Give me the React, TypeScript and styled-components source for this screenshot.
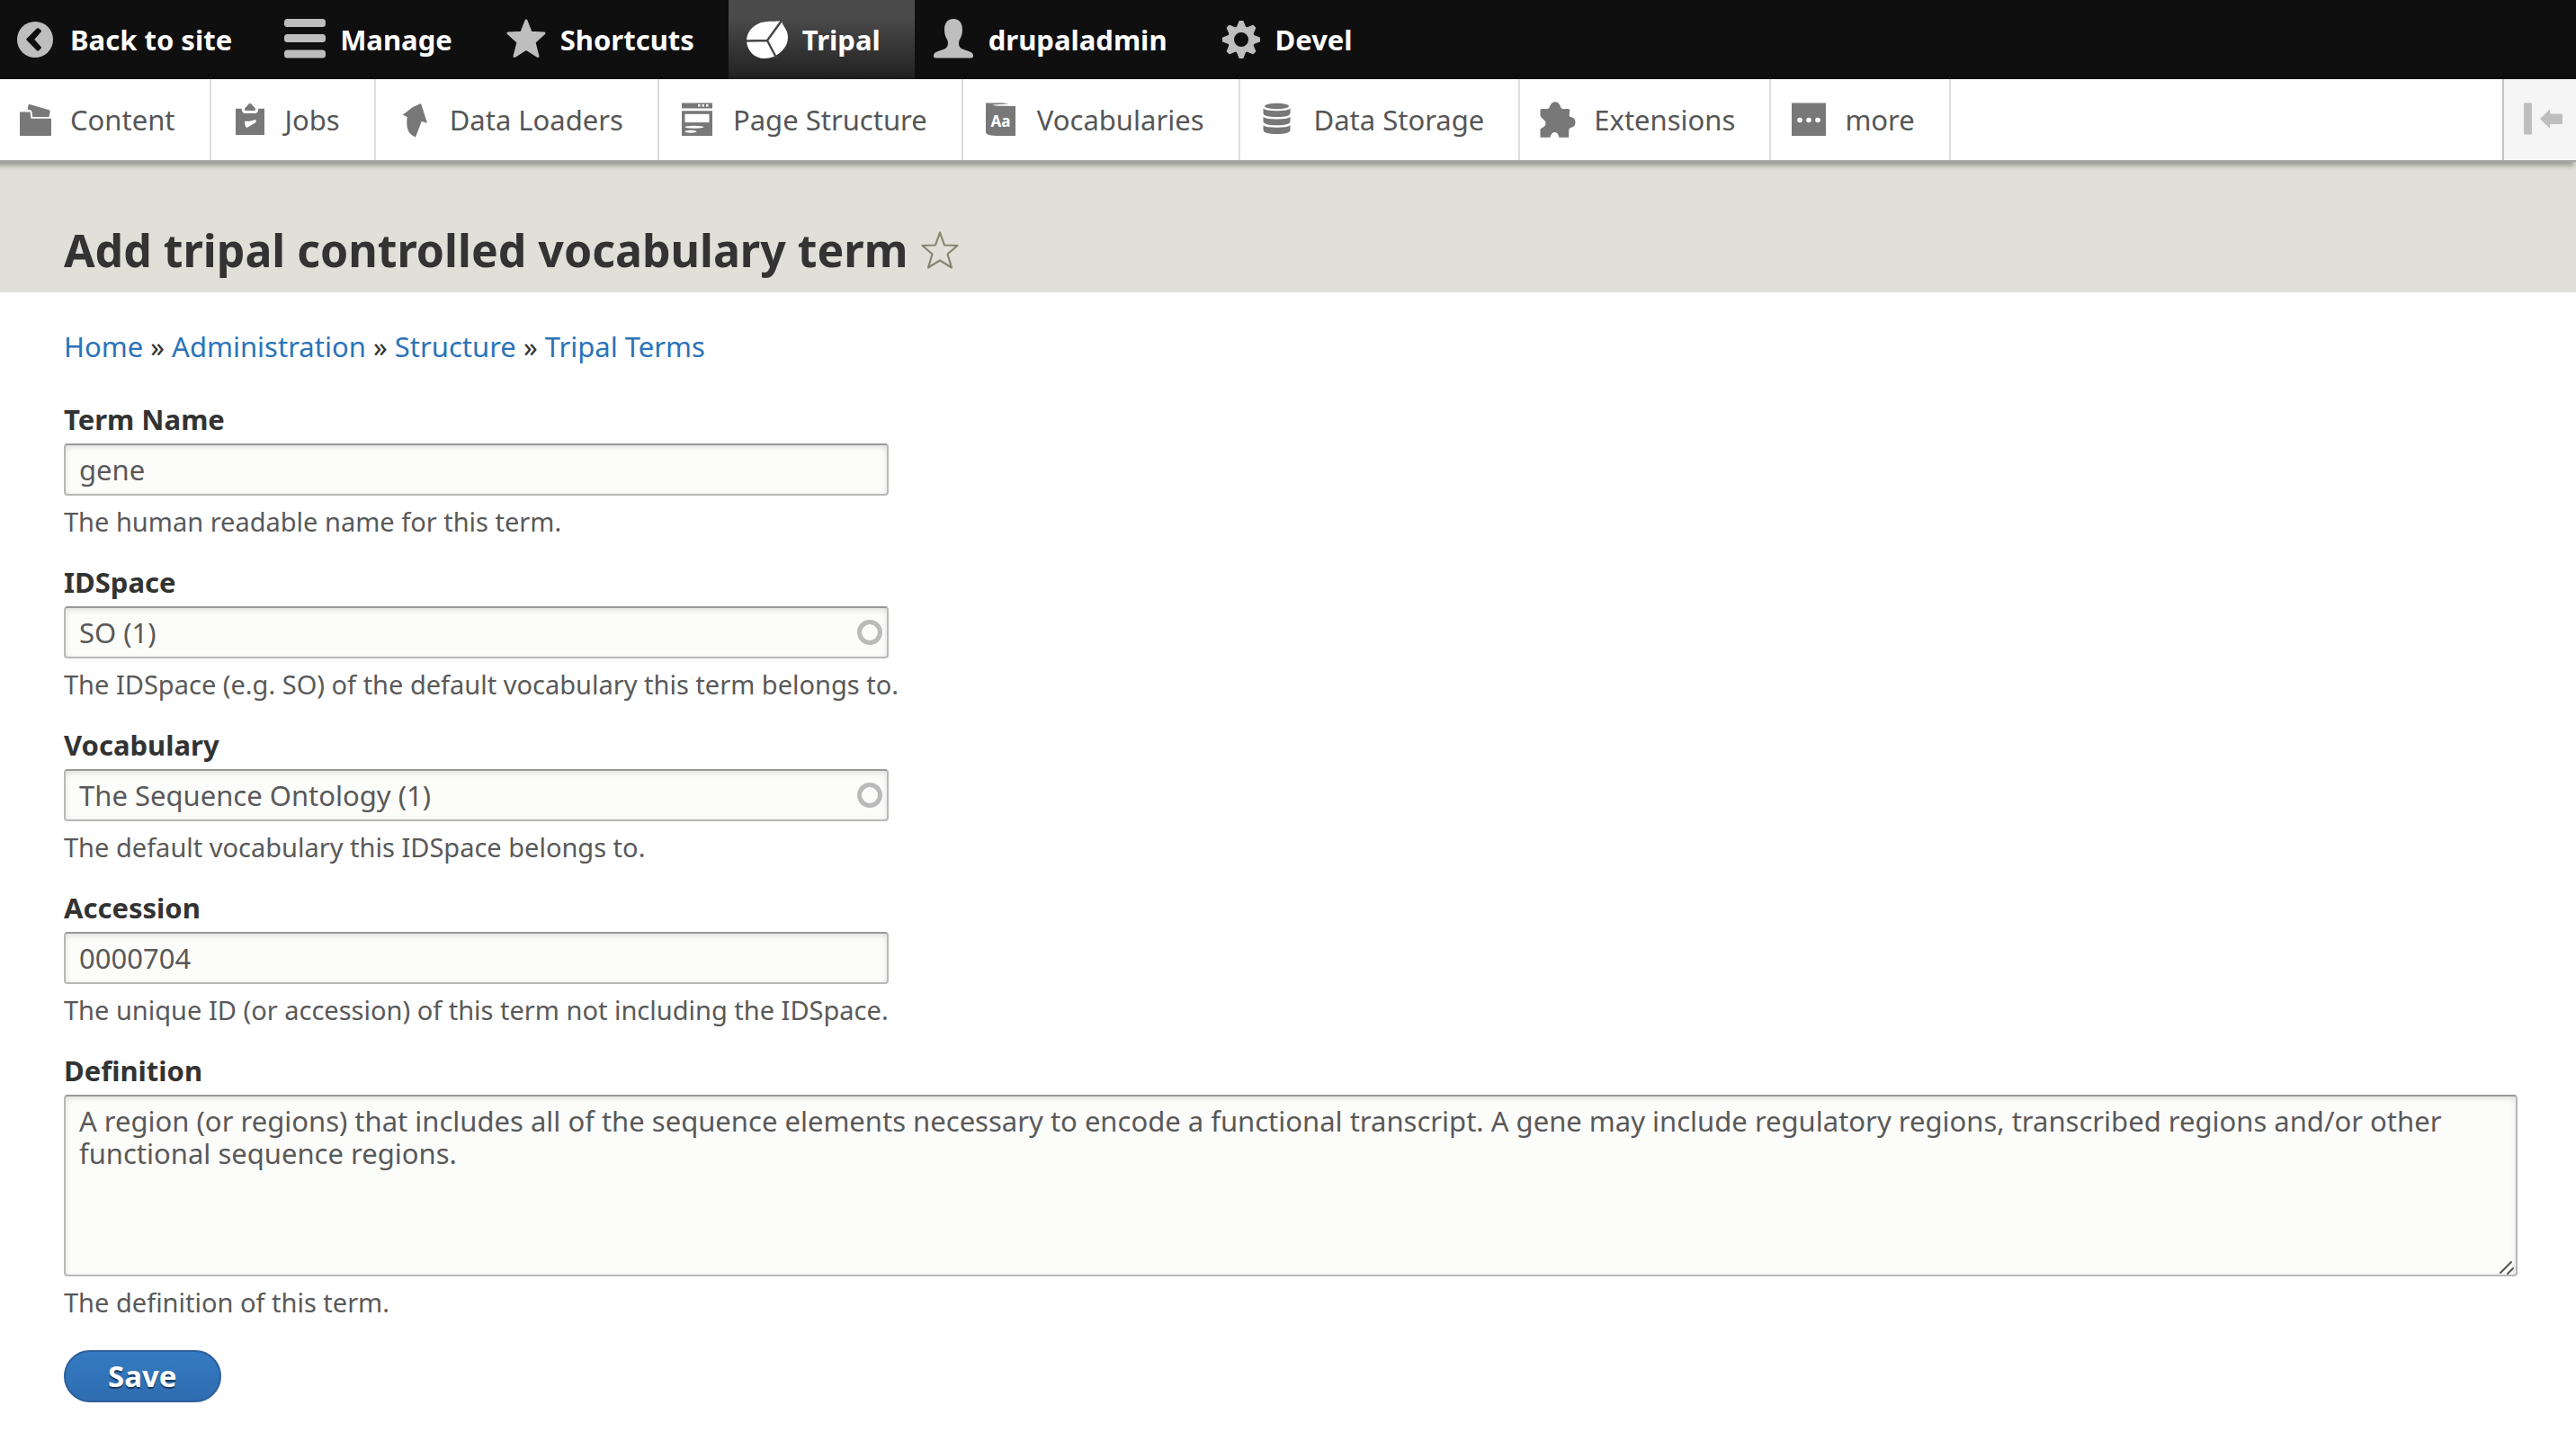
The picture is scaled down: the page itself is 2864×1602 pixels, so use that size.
import React from 'react';
import styled, { createGlobalStyle, css } from 'styled-components';

const fonts = '"Noto Sans", "Open Sans", "Lucida Grande", sans-serif';

const GlobalStyle = createGlobalStyle`
  *, *::before, *::after { box-sizing: border-box; }
  body {
    margin: 0;
    background: #fff;
    color: #333;
    font-family: ${fonts};
    font-size: 31px;
    line-height: 40px;
  }
`;

const Toolbar = styled.nav`
  background: #0f0f0f;
`;

const TabList = styled.ul`
  display: flex;
  margin: 0;
  padding: 0;
  list-style: none;
`;

const tabLayout = css`
  display: flex;
  align-items: center;
  gap: 16px;
  padding: 0 38px 0 20px;
  white-space: nowrap;
  text-decoration: none;
  li:first-child > & {
    padding-left: 16px;
  }
`;

const BarLink = styled.a<{ $active?: boolean }>`
  ${tabLayout}
  height: 88px;
  color: #fff;
  font-weight: 700;
  ${(p) =>
    p.$active &&
    css`
      background: linear-gradient(#4b4b4b 20%, #212121 100%);
    `}
`;

const Tray = styled.nav`
  position: relative;
  display: flex;
  justify-content: space-between;
  background: #fff;
  border-bottom: 2px solid #a6a6a4;
  box-shadow: -4px 2px 6px 2px rgba(0, 0, 0, 0.3333);
`;

const TrayItem = styled.li`
  border-right: 2px solid #ddd;
`;

const TrayLink = styled.a`
  ${tabLayout}
  height: 90px;
  color: #565656;
`;

const ToggleButton = styled.button`
  display: flex;
  align-items: center;
  width: 82px;
  padding: 0 0 0 22px;
  border: 0;
  border-left: 2px solid #c4c4c4;
  background: #f5f5f5;
`;

const Icon = styled.svg`
  flex: none;
  width: 46px;
  height: 46px;
  overflow: visible;
`;

const PageHeader = styled.header`
  display: flex;
  align-items: center;
  gap: 14px;
  padding: 66px 65px 15px 71px;
  background: #e0e0d8;
`;

const Title = styled.h1`
  margin: 0;
  font-size: 50px;
  line-height: 64px;
  font-weight: 700;
`;

const StarButton = styled.button`
  display: flex;
  padding: 0;
  border: 0;
  background: none;
`;

const Main = styled.main`
  padding: 40px 65px 40px 71px;
`;

const Breadcrumb = styled.nav`
  margin-bottom: 41px;
  a {
    color: #2b73b9;
    text-decoration: none;
  }
`;

const Field = styled.div`
  margin-bottom: 27px;
`;

const Label = styled.label`
  display: block;
  margin-bottom: 7px;
  font-weight: 700;
`;

const Control = styled.div<{ $wide?: boolean }>`
  position: relative;
  display: flex;
  width: ${(p) => (p.$wide ? '100%' : '917px')};
  max-width: 100%;
`;

const controlLook = css`
  width: 100%;
  margin: 0;
  border: 2px solid #b8b8b8;
  border-top-color: #999;
  border-radius: 4px;
  background: #fcfcfa;
  box-shadow: inset 0 2px 6px rgba(0, 0, 0, 0.125);
  color: #595959;
  font-family: inherit;
  font-size: 31px;
`;

const TextInput = styled.input`
  ${controlLook}
  height: 58px;
  padding: 0 15px;
`;

const TextArea = styled.textarea`
  ${controlLook}
  height: 202px;
  padding: 9px 15px;
  line-height: 36px;
  resize: vertical;
  &::-webkit-resizer {
    background: transparent;
  }
`;

const Throbber = styled.span`
  position: absolute;
  top: 15px;
  right: 7px;
  width: 28px;
  height: 28px;
  border: 5px solid #bababa;
  border-radius: 50%;
`;

const Grip = styled.svg`
  position: absolute;
  right: 4px;
  bottom: 2px;
  width: 16px;
  height: 16px;
  pointer-events: none;
`;

const Description = styled.p`
  margin: 9px 0 0;
  color: #595959;
  font-size: 29px;
`;

const Actions = styled.div`
  padding-top: 6px;
`;

const SaveButton = styled.button`
  display: block;
  height: 58px;
  padding: 0 47px;
  border: 2px solid #2d5f9b;
  border-radius: 29px;
  background: linear-gradient(#347bc1, #2f6cb0);
  color: #fff;
  font-family: inherit;
  font-size: 33px;
  font-weight: 700;
  line-height: 54px;
  text-shadow: 0 2px 1px rgba(0, 0, 0, 0.5);
`;

const BackIcon = () => (
  <Icon viewBox="0 0 46 46" aria-hidden>
    <circle cx="23" cy="23" r="20" fill="#bebebe" />
    <path
      d="M26 11 14.2 22.8 26 34.8 29 32 21 22.8 29 13.6Z"
      fill="#0f0f0f"
      stroke="#0f0f0f"
      strokeWidth="2"
      strokeLinejoin="round"
    />
  </Icon>
);

const MenuIcon = () => (
  <Icon viewBox="0 0 46 46" fill="#bebebe" aria-hidden>
    <rect width="46" height="9" rx="3.5" />
    <rect y="17" width="46" height="9" rx="3.5" />
    <rect y="34.5" width="46" height="9" rx="3.5" />
  </Icon>
);

const StarIcon = () => (
  <Icon viewBox="0 0 46 46" aria-hidden>
    <path
      d="M24 2 29.2 15.3 44 16 33 25.8 37 41.5 24 33.2 11 41.5 15 25.8 4 16 18.8 15.3Z"
      fill="#bebebe"
      stroke="#bebebe"
      strokeWidth="3"
      strokeLinejoin="round"
    />
  </Icon>
);

const TripalIcon = () => (
  <Icon viewBox="0 0 46 46" aria-hidden>
    <path
      d="M39 2C33 3.500 25 1.500 16 4 6 8 0 15 0 25 1 36 9 44 20 44 27 44 34 41 39 36 44 31 46 26 46 20 46 12 40 8 39 2Z"
      fill="#fff"
    />
    <path d="M0 24.500 23 24 39 2M23 24 33 43" fill="none" stroke="#454545" strokeWidth="2.400" />
  </Icon>
);

const UserIcon = () => (
  <Icon viewBox="0 0 46 46" aria-hidden>
    <path
      d="M23 0C16 0 13 5 13 12 13 18 15 21 16.500 24 17.500 28 17 31 14 33 8 36 1 36 1 41 1 43 2 43.500 4 43.500H42C44 43.500 45 43 45 41 45 36 38 36 32 33 29 31 28.500 28 29.500 24 31 21 33 18 33 12 33 5 30 0 23 0Z"
      fill="#bebebe"
    />
  </Icon>
);

const GearIcon = () => (
  <Icon viewBox="0 0 46 46" fill="#bebebe" aria-hidden>
    <circle cx="24" cy="23" r="11.500" fill="none" stroke="#bebebe" strokeWidth="7" />
    {[0, 45, 90, 135, 180, 225, 270, 315].map((angle) => (
      <path key={angle} d="M18.500 10 21.500 2.500Q21.700 2 22.200 2H25.800Q26.300 2 26.500 2.500L29.500 10Z" transform={`rotate(${angle} 24 23)`} />
    ))}
  </Icon>
);

const FolderIcon = () => (
  <Icon viewBox="0 0 46 46" fill="#787878" aria-hidden>
    <path d="M6 14.500H17.500L18.500 21.800H41V41H6Z" />
    <path d="M17 6 38.500 12.200Q40 12.700 39.700 14L38.500 20H20.200L19.500 14 18.500 12.800 14.700 11.500 15.500 7Q16 5.800 17 6Z" />
  </Icon>
);

const JobsIcon = () => (
  <Icon viewBox="0 0 46 46" fill="#787878" aria-hidden>
    <path d="M7 10.700H13.500C14 14 15 16 17.500 16H28C31 16 32 14 32.300 10.700H39V40H7Z" />
    <path d="M17 11C18 8.500 20.500 8 21 6 22 4.700 24 4.700 25 6 25.500 8 28 8.500 29 11 29.200 12.500 28.500 13 27.500 13H18.500C17.500 13 16.800 12.500 17 11Z" />
    <path
      d="M17 24.700 22.500 24.800 29 23Q30 23.500 29.500 26L22 30.500 19 32Q17 30 17 24.700Z"
      fill="#fff"
    />
  </Icon>
);

const LoaderIcon = () => (
  <Icon viewBox="0 0 46 46" fill="#787878" aria-hidden>
    <path d="M30 5 21 9 9.700 17.700 14.700 20C14 27 14 33 17.500 38 19.500 40.500 22 41.500 24 42.500L30.700 25 37 26.700Z" />
  </Icon>
);

const PageIcon = () => (
  <Icon viewBox="0 0 46 46" fill="#787878" aria-hidden>
    <path d="M5 4.500H39V10.500H5ZM5 13.300H39V41H5Z" />
    <g fill="#fff">
      <rect x="23" y="6" width="2.500" height="2.500" />
      <rect x="27.500" y="6" width="2.500" height="2.500" />
      <rect x="32" y="6" width="2.500" height="2.500" />
      <rect x="8.500" y="16.800" width="27" height="9.300" />
      <ellipse cx="19" cy="31.300" rx="10.500" ry="1.500" />
      <ellipse cx="15" cy="36.300" rx="6.500" ry="1.500" />
    </g>
  </Icon>
);

const BookIcon = () => (
  <Icon viewBox="0 0 46 46" fill="#787878" aria-hidden>
    <path d="M5 4.500H24Q29 4.700 30 5.500L12 6.500Q16 8 22 7.700L38 8V41H20Q5 41 5 37Z" />
    <text x="10.500" y="31" fill="#fff" fontSize="17" fontWeight="700">
      Aa
    </text>
  </Icon>
);

const StorageIcon = () => (
  <Icon viewBox="0 0 46 46" fill="#787878" aria-hidden>
    <ellipse cx="20.500" cy="8" rx="13.500" ry="3.300" />
    <path d="M5.500 10.500Q8 13.300 20.500 13.300T35.500 10.500V16Q35 20 20.500 20T5.500 16Z" />
    <path d="M5.500 20Q8 22.500 20.500 22.500T35.500 20V25Q35 29.300 20.500 29.300T5.500 25Z" />
    <path d="M5.500 29.300Q8 31.800 20.500 31.800T35.500 29.300V34.500Q35 39 20.500 39T5.500 34.500Z" />
  </Icon>
);

const PuzzleIcon = () => (
  <Icon viewBox="0 0 46 46" fill="#787878" aria-hidden>
    <path d="M2.500 11.500C6 10.500 11 12 12.500 10 13.500 7 15 3.300 19 3.300S24.500 7 25.500 10C27 12 31 10.500 35 11.500 36 14 34 17 35 19.500 37 20.500 41.500 20.500 41.500 26S37 31.500 35 32.500C33.500 36 34.500 39 34 42.700H23.500C23 40 21 37 18.500 37S14 40 13.500 42.700H2.500V33.500C4 32 8.500 31 8.500 27S3 22 2.500 18Z" />
  </Icon>
);

const MoreIcon = () => (
  <Icon viewBox="0 0 46 46" fill="#787878" aria-hidden>
    <rect x="3" y="4.500" width="38" height="36.500" />
    <g fill="#fff">
      <circle cx="12" cy="23.500" r="2.800" />
      <circle cx="22" cy="23.500" r="2.800" />
      <circle cx="32" cy="23.500" r="2.800" />
    </g>
  </Icon>
);

const barItems = [
  { text: 'Back to site', icon: <BackIcon /> },
  { text: 'Manage', icon: <MenuIcon /> },
  { text: 'Shortcuts', icon: <StarIcon /> },
  { text: 'Tripal', icon: <TripalIcon />, active: true },
  { text: 'drupaladmin', icon: <UserIcon /> },
  { text: 'Devel', icon: <GearIcon /> },
];

const trayItems = [
  { text: 'Content', icon: <FolderIcon /> },
  { text: 'Jobs', icon: <JobsIcon /> },
  { text: 'Data Loaders', icon: <LoaderIcon /> },
  { text: 'Page Structure', icon: <PageIcon /> },
  { text: 'Vocabularies', icon: <BookIcon /> },
  { text: 'Data Storage', icon: <StorageIcon /> },
  { text: 'Extensions', icon: <PuzzleIcon /> },
  { text: 'more', icon: <MoreIcon /> },
];

const crumbs = ['Home', 'Administration', 'Structure', 'Tripal Terms'];

const fields = [
  { id: 'name', label: 'Term Name', value: 'gene', help: 'The human readable name for this term.' },
  {
    id: 'idspace',
    label: 'IDSpace',
    value: 'SO (1)',
    help: 'The IDSpace (e.g. SO) of the default vocabulary this term belongs to.',
    lookup: true,
  },
  {
    id: 'vocabulary',
    label: 'Vocabulary',
    value: 'The Sequence Ontology (1)',
    help: 'The default vocabulary this IDSpace belongs to.',
    lookup: true,
  },
  {
    id: 'accession',
    label: 'Accession',
    value: '0000704',
    help: 'The unique ID (or accession) of this term not including the IDSpace.',
  },
];

const definition =
  'A region (or regions) that includes all of the sequence elements necessary to encode a functional transcript. A gene may include regulatory regions, transcribed regions and/or other functional sequence regions.';

export default function App() {
  return (
    <>
      <GlobalStyle />
      <Toolbar>
        <TabList>
          {barItems.map((item) => (
            <li key={item.text}>
              <BarLink href="#" $active={item.active}>
                {item.icon}
                {item.text}
              </BarLink>
            </li>
          ))}
        </TabList>
      </Toolbar>
      <Tray>
        <TabList>
          {trayItems.map((item) => (
            <TrayItem key={item.text}>
              <TrayLink href="#">
                {item.icon}
                {item.text}
              </TrayLink>
            </TrayItem>
          ))}
        </TabList>
        <ToggleButton type="button" aria-label="Vertical orientation">
          <Icon viewBox="0 0 46 46" fill="#bebebe" aria-hidden>
            <rect y="4.500" width="9" height="35" rx="1" />
            <path d="M18 22 29 11.500V16.500H42Q43 16.500 43 17.500V27Q43 28 42 28H29V33Z" />
          </Icon>
        </ToggleButton>
      </Tray>
      <PageHeader>
        <Title>Add tripal controlled vocabulary term</Title>
        <StarButton type="button" aria-label="Add to shortcuts">
          <svg width="44" height="44" viewBox="0 0 44 44" aria-hidden>
            <path
              d="M22 2.500 27 16.500 41.500 17 30.500 26.500 35 41.500 22 33.500 9 41.500 13.500 26.500 2.500 17 17 16.500Z"
              fill="none"
              stroke="#87856f"
              strokeWidth="2.200"
              strokeLinejoin="round"
            />
          </svg>
        </StarButton>
      </PageHeader>
      <Main>
        <Breadcrumb aria-label="Breadcrumb">
          {crumbs.map((crumb, i) => (
            <React.Fragment key={crumb}>
              {i > 0 && ' » '}
              <a href="#">{crumb}</a>
            </React.Fragment>
          ))}
        </Breadcrumb>
        <form onSubmit={(e) => e.preventDefault()}>
          {fields.map((field) => (
            <Field key={field.id}>
              <Label htmlFor={field.id}>{field.label}</Label>
              <Control>
                <TextInput id={field.id} type="text" defaultValue={field.value} />
                {field.lookup && <Throbber />}
              </Control>
              <Description>{field.help}</Description>
            </Field>
          ))}
          <Field>
            <Label htmlFor="definition">Definition</Label>
            <Control $wide>
              <TextArea id="definition" defaultValue={definition} />
              <Grip viewBox="0 0 16 16" aria-hidden>
                <path d="M1 14 13 2M9 15 15 9" stroke="#555" strokeWidth="2" strokeLinecap="round" />
              </Grip>
            </Control>
            <Description>The definition of this term.</Description>
          </Field>
          <Actions>
            <SaveButton type="submit">Save</SaveButton>
          </Actions>
        </form>
      </Main>
    </>
  );
}
